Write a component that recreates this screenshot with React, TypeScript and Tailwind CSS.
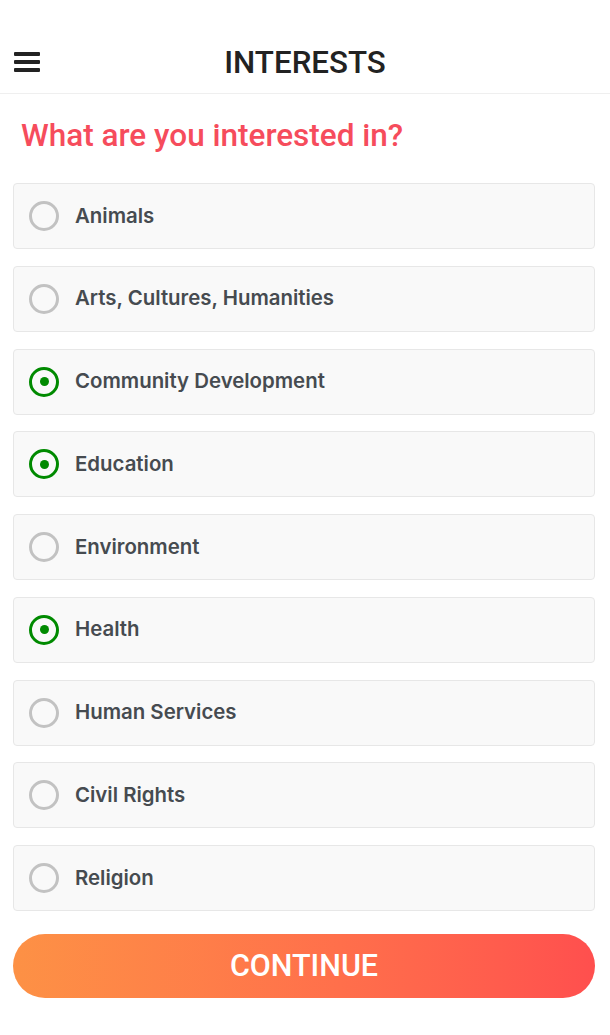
import React, { useState } from "react";

const ITEMS = [
  "Animals",
  "Arts, Cultures, Humanities",
  "Community Development",
  "Education",
  "Environment",
  "Health",
  "Human Services",
  "Civil Rights",
  "Religion",
];

export default function App() {
  const [sel, setSel] = useState<Record<string, boolean>>({
    "Community Development": true,
    Education: true,
    Health: true,
  });
  return (
    <div className="w-[610px] h-[1035px] bg-white overflow-hidden">
      <header className="relative h-[94px] border-b border-[#efefef] flex items-center justify-center">
        <div className="absolute left-[14px] top-[52px] w-[26px] h-[20px] flex flex-col justify-between">
          <div className="h-[4px] bg-[#222] rounded-[1px]" />
          <div className="h-[4px] bg-[#222] rounded-[1px]" />
          <div className="h-[4px] bg-[#222] rounded-[1px]" />
        </div>
        <h1
          className="mt-[32px] text-[31.3px] font-medium leading-none text-[#222]"
          style={{ fontFamily: "Roboto, sans-serif" }}
        >
          INTERESTS
        </h1>
      </header>
      <div className="pl-[13px] pr-[15px]">
        <h2
          className="pl-[8px] pt-[22px] h-[89px] text-[31.5px] font-medium leading-[40px] text-[#f64c5c]"
          style={{ fontFamily: "Roboto, sans-serif" }}
        >
          What are you interested in?
        </h2>
        <div className="flex flex-col gap-[16.75px]">
          {ITEMS.map((it) => {
            const on = !!sel[it];
            return (
              <button
                key={it}
                onClick={() => setSel({ ...sel, [it]: !on })}
                className="h-[66px] w-full flex items-center bg-[#f9f9f9] border border-[#e7e7e7] rounded-[4px] pl-[15px] text-left"
              >
                <span
                  className={
                    on
                      ? "w-[30px] h-[30px] rounded-full border-[3px] border-[#008a00] flex items-center justify-center"
                      : "w-[30px] h-[30px] rounded-full border-[3px] border-[#c2c2c2]"
                  }
                >
                  {on && <span className="w-[9px] h-[9px] rounded-full bg-[#008a00]" />}
                </span>
                <span
                  className="ml-[16px] text-[20.4px] font-semibold text-[#464b50]"
                  style={{ fontFamily: "Inter, sans-serif" }}
                >
                  {it}
                </span>
              </button>
            );
          })}
        </div>
        <button
          className="mt-[23px] w-full h-[64px] rounded-full bg-gradient-to-r from-[#fd9145] to-[#ff4f4e] text-white text-[30.5px] font-medium leading-none flex items-center justify-center"
          style={{ fontFamily: "Roboto, sans-serif" }}
        >
          CONTINUE
        </button>
      </div>
    </div>
  );
}
